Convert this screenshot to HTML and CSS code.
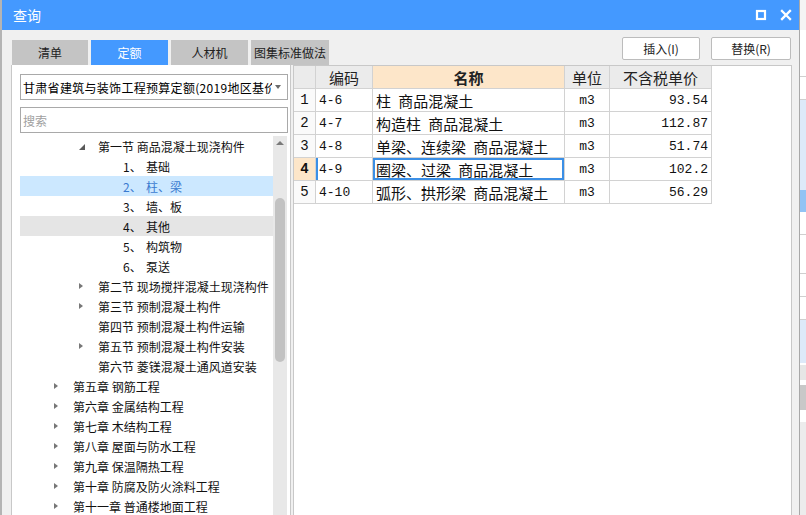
FILE: index.html
```html
<!DOCTYPE html>
<html lang="zh">
<head>
<meta charset="utf-8">
<title>查询</title>
<link rel="stylesheet" href="styles.css">
</head>
<body>
<div class="bg-left"></div>
<div class="dialog">
  <div class="titlebar">
    <span class="title">查询</span>
    <div class="win-btns">
      <svg class="ic" width="12" height="12" viewBox="0 0 12 12"><rect x="2" y="2" width="8" height="8" fill="none" stroke="#fff" stroke-width="2.2"/></svg>
      <svg class="ic" width="12" height="12" viewBox="0 0 12 12"><path d="M2 2L10 10M10 2L2 10" stroke="#fff" stroke-width="2.3" stroke-linecap="square"/></svg>
    </div>
  </div>
  <div class="toolbar">
    <div class="tabs">
      <div class="tab w76">清单</div>
      <div class="tab w77 active">定额</div>
      <div class="tab w77">人材机</div>
      <div class="tab w78">图集标准做法</div>
    </div>
    <div class="actions">
      <button class="btn w78">插入(I)</button>
      <button class="btn w80">替换(R)</button>
    </div>
  </div>
  <div class="main">
    <div class="left-panel">
      <div class="select">
        <span class="select-text">甘肃省建筑与装饰工程预算定额(2019地区基价)</span>
        <span class="caret"></span>
      </div>
      <input class="search" type="text" placeholder="搜索">
      <div class="tree-wrap">
        <div class="tree">
          <div class="row lv1"><span class="tog"><svg width="6" height="6" viewBox="0 0 6 6"><polygon points="6,0 6,6 0,6" fill="#595959"/></svg></span>第一节 商品混凝土现浇构件</div>
          <div class="row lv2"><span class="num">1、</span>基础</div>
          <div class="row lv2 selected"><span class="num">2、</span>柱、梁</div>
          <div class="row lv2"><span class="num">3、</span>墙、板</div>
          <div class="row lv2 hover"><span class="num">4、</span>其他</div>
          <div class="row lv2"><span class="num">5、</span>构筑物</div>
          <div class="row lv2"><span class="num">6、</span>泵送</div>
          <div class="row lv1"><span class="tog"><span class="tri"></span></span>第二节 现场搅拌混凝土现浇构件</div>
          <div class="row lv1"><span class="tog"><span class="tri"></span></span>第三节 预制混凝土构件</div>
          <div class="row lv1"><span class="tog"></span>第四节 预制混凝土构件运输</div>
          <div class="row lv1"><span class="tog"><span class="tri"></span></span>第五节 预制混凝土构件安装</div>
          <div class="row lv1"><span class="tog"></span>第六节 菱镁混凝土通风道安装</div>
          <div class="row lv0"><span class="tog"><span class="tri"></span></span>第五章 钢筋工程</div>
          <div class="row lv0"><span class="tog"><span class="tri"></span></span>第六章 金属结构工程</div>
          <div class="row lv0"><span class="tog"><span class="tri"></span></span>第七章 木结构工程</div>
          <div class="row lv0"><span class="tog"><span class="tri"></span></span>第八章 屋面与防水工程</div>
          <div class="row lv0"><span class="tog"><span class="tri"></span></span>第九章 保温隔热工程</div>
          <div class="row lv0"><span class="tog"><span class="tri"></span></span>第十章 防腐及防火涂料工程</div>
          <div class="row lv0"><span class="tog"><span class="tri"></span></span>第十一章 普通楼地面工程</div>
        </div>
        <div class="vscroll">
          <span class="up"></span>
          <span class="thumb"></span>
        </div>
      </div>
    </div>
    <div class="right-panel">
      <div class="grid">
        <div class="cell hd"></div>
        <div class="cell hd">编码</div>
        <div class="cell hd name">名称</div>
        <div class="cell hd">单位</div>
        <div class="cell hd">不含税单价</div>

        <div class="cell rn">1</div>
        <div class="cell code">4-6</div>
        <div class="cell nm">柱 商品混凝土</div>
        <div class="cell unit">m3</div>
        <div class="cell price">93.54</div>

        <div class="cell rn">2</div>
        <div class="cell code">4-7</div>
        <div class="cell nm">构造柱 商品混凝土</div>
        <div class="cell unit">m3</div>
        <div class="cell price">112.87</div>

        <div class="cell rn">3</div>
        <div class="cell code">4-8</div>
        <div class="cell nm">单梁、连续梁 商品混凝土</div>
        <div class="cell unit">m3</div>
        <div class="cell price">51.74</div>

        <div class="cell rn current">4</div>
        <div class="cell code current-code">4-9</div>
        <div class="cell nm focus">圈梁、过梁 商品混凝土</div>
        <div class="cell unit">m3</div>
        <div class="cell price">102.2</div>

        <div class="cell rn">5</div>
        <div class="cell code">4-10</div>
        <div class="cell nm">弧形、拱形梁 商品混凝土</div>
        <div class="cell unit">m3</div>
        <div class="cell price">56.29</div>
      </div>
    </div>
  </div>
</div>
<div class="bg-right">
  <div class="s s1"></div>
  <div class="s s2"></div>
  <div class="s s3"></div>
  <div class="s s4"></div>
  <div class="s s5"></div>
  <div class="s s6"></div>
  <div class="s s7"></div>
  <div class="s s8"></div>
  <div class="s s9"></div>
  <div class="s s10"></div>
  <div class="s s11"></div>
  <div class="s s12"></div>
  <div class="s s13"></div>
  <div class="s s14"></div>
  <div class="s s15"></div>
</div>
</body>
</html>
```

FILE: styles.css
```css
* { box-sizing: border-box; margin: 0; padding: 0; }
html, body { width: 806px; height: 515px; overflow: hidden; }
body {
  display: flex;
  font-family: "Noto Sans CJK SC", "Noto Sans", sans-serif;
  font-size: 12px;
  color: #1a1a1a;
  background: #fff;
}

.bg-left { width: 2px; flex: none; background: #b4b4b4; }

.dialog {
  width: 798px;
  flex: none;
  display: flex;
  flex-direction: column;
  background: #f0f0f0;
  border-right: 1px solid #a8a8a8;
}

/* title bar */
.titlebar {
  height: 30px;
  flex: none;
  background: #4499ff;
  display: flex;
  align-items: center;
  padding-left: 11px;
  color: #fff;
}
.title { flex: 1; font-size: 14px; }
.win-btns { display: flex; align-items: center; gap: 13px; padding-right: 7px; }
.ic { display: block; }

/* toolbar */
.toolbar {
  height: 35px;
  flex: none;
  display: flex;
  justify-content: space-between;
  padding: 0 8px 0 10px;
}
.tabs { display: flex; gap: 3px; align-self: flex-end; }
.tab {
  height: 25px;
  background: #c4c4c4;
  display: flex;
  align-items: center;
  justify-content: center;
  font-size: 12px;
  color: #222;
  white-space: nowrap;
}
.tab.active { background: #4499ff; color: #fff; }
.w76 { width: 76px; }
.w77 { width: 77px; }
.w78 { width: 78px; }
.w80 { width: 80px; }

.actions { display: flex; gap: 11px; padding-top: 7px; }
.btn {
  height: 23px;
  background: #fff;
  border: 1px solid #bcbcbc;
  border-radius: 2px;
  font-family: "Noto Sans CJK SC", "Noto Sans", sans-serif;
  font-size: 12px;
  color: #222;
}

/* main area */
.main {
  flex: 1;
  min-height: 0;
  display: flex;
  padding-left: 9px;
}
.left-panel {
  width: 280px;
  flex: none;
  background: #fff;
  border-left: 1px solid #c8c8c8;
  border-right: 1px solid #c8c8c8;
  padding: 9px 2px 0 8px;
  display: flex;
  flex-direction: column;
}
.select {
  height: 26px;
  flex: none;
  border: 1px solid #a9a9a9;
  display: flex;
  align-items: center;
  padding-left: 2px;
}
.select-text {
  flex: 1;
  overflow: hidden;
  white-space: nowrap;
  color: #000;
  font-size: 12px;
  letter-spacing: 0.3px;
}
.caret {
  width: 0;
  height: 0;
  border-left: 3px solid transparent;
  border-right: 3px solid transparent;
  border-top: 4px solid #6a6a6a;
  margin: 0 6px 0 3px;
}
.search {
  height: 26px;
  flex: none;
  margin-top: 7px;
  border: 1px solid #a9a9a9;
  padding-left: 2px;
  font-family: "Noto Sans CJK SC", "Noto Sans", sans-serif;
  font-size: 12px;
  outline: none;
  background: #fff;
}
.search::placeholder { color: #a0a0a0; }

.tree-wrap {
  flex: 1;
  min-height: 0;
  margin-top: 3px;
  display: flex;
}
.tree { width: 253px; flex: none; overflow: hidden; }
.row {
  height: 20px;
  display: flex;
  align-items: center;
  white-space: nowrap;
  color: #111;
}
.row.selected { background: #cce8ff; color: #3b7bd0; }
.row.hover { background: #e5e5e5; }
.lv0 { padding-left: 34px; }
.lv1 { padding-left: 59px; }
.lv2 { padding-left: 103px; }
.tog { width: 19px; flex: none; display: flex; align-items: center; }
.tog svg { display: block; margin-top: 1px; }
.tri {
  width: 0;
  height: 0;
  border-left: 4px solid #777;
  border-top: 3.5px solid transparent;
  border-bottom: 3.5px solid transparent;
}
.num { width: 23px; flex: none; }

.vscroll {
  width: 14px;
  flex: none;
  background: #e8e8e8;
  display: flex;
  flex-direction: column;
  align-items: center;
}
.up {
  margin-top: 5px;
  width: 0;
  height: 0;
  border-left: 4px solid transparent;
  border-right: 4px solid transparent;
  border-bottom: 4px solid #7a7a7a;
}
.thumb {
  margin-top: 53px;
  width: 10px;
  height: 164px;
  border-radius: 5px;
  background: #c2c2c2;
}

/* right panel / grid */
.right-panel {
  width: 499px;
  flex: none;
  margin-left: 2px;
  background: #fff;
  border: 1px solid #c8c8c8;
  border-bottom: none;
}
.grid {
  display: grid;
  grid-template-columns: 22px 57px 192px 45px 102px;
  grid-auto-rows: 23px;
  width: 418px;
}
.cell {
  border-right: 1px solid #d2d2d2;
  border-bottom: 1px solid #d2d2d2;
  display: flex;
  align-items: center;
  overflow: hidden;
  white-space: nowrap;
  color: #111;
}
.hd {
  background: #ebebeb;
  justify-content: center;
  font-size: 15px;
  color: #222;
}
.hd.name { background: #fde6c9; font-weight: bold; }
.rn {
  justify-content: center;
  font-family: "Liberation Mono", monospace;
  font-size: 14px;
  background: #fafafa;
}
.rn.current { background: #fde6c9; font-weight: bold; }
.code {
  padding-left: 3px;
  font-family: "Liberation Mono", monospace;
  font-size: 13px;
}
.current-code { box-shadow: inset 2px 0 0 #3b8fe6; }
.nm {
  padding-left: 3px;
  font-size: 15px;
  word-spacing: 4px;
}
.focus { box-shadow: inset 0 0 0 2px #3b8fe6; }
.unit {
  justify-content: center;
  font-family: "Liberation Mono", monospace;
  font-size: 13px;
}
.price {
  justify-content: flex-end;
  padding-right: 3px;
  font-family: "Liberation Mono", monospace;
  font-size: 13px;
}

/* background application strip on the right */
.bg-right {
  width: 6px;
  flex: none;
  display: flex;
  flex-direction: column;
  background: #fff;
}
.s { flex: none; }
.s1 { height: 30px; background: #f4f4f4; }
.s2 { height: 47px; border-bottom: 1px solid #cfcfcf; }
.s3 { height: 23px; border-bottom: 1px solid #cfcfcf; }
.s4 { height: 90px; background: #dde9f9; }
.s5 { height: 22px; background: #92c3f4; }
.s6 { height: 23px; border-bottom: 1px solid #cfcfcf; }
.s7 { height: 39px; border-bottom: 1px solid #cfcfcf; }
.s8 { height: 23px; border-bottom: 1px solid #cfcfcf; }
.s9 { height: 23px; border-bottom: 1px solid #cfcfcf; }
.s10 { height: 43px; background: #dde9f9; }
.s11 { height: 2px; }
.s12 { height: 15px; background: #e6e6e6; }
.s13 { height: 5px; }
.s14 { height: 25px; background: #c8c8c8; }
.s15 { flex: 1; background: #ececec; border-top: 12px solid #fff; }
```
